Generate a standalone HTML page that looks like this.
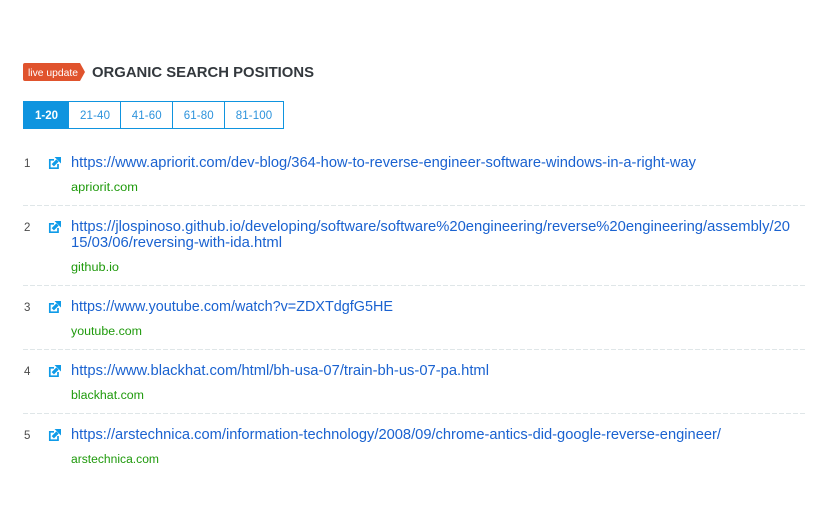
<!DOCTYPE html>
<html><head><meta charset="utf-8">
<style>
html,body{margin:0;padding:0;background:#fff;width:825px;height:525px;overflow:hidden}
body{position:relative;font-family:"Liberation Sans",sans-serif}
svg.t{position:absolute;left:0;top:0}
text{font-family:"Liberation Sans",sans-serif}
.u{font-size:14.5px;fill:#1a62d0}
.d{font-size:11.5px;fill:#1f9a0c}
.n{font-size:11.5px;fill:#4a4a4a}
.p{font-size:11.5px;fill:#2c93dc}
</style></head><body>
<svg class="t" width="825" height="525" viewBox="0 0 825 525">
<defs>
<g id="i"><path d="M6 3.800H1.800V12.200H10V8" fill="none" stroke="#0f9be8" stroke-width="1.700"/><path d="M6.500 1H13V7.500Z" fill="#0f9be8"/><path d="M9.500 4.500L4.800 9.300" fill="none" stroke="#0f9be8" stroke-width="3.200"/></g>
</defs>
<path d="M25 63H80L85 72L80 81H25Q23 81 23 79V65Q23 63 25 63Z" fill="#e0532d"/>
<text x="28" y="76" font-size="10.5" fill="#fff" textLength="50" lengthAdjust="spacingAndGlyphs">live update</text>
<text x="92" y="77" font-size="15" font-weight="bold" fill="#33383d" textLength="222" lengthAdjust="spacingAndGlyphs">ORGANIC SEARCH POSITIONS</text>
<rect x="23.5" y="101.5" width="260" height="27" fill="#fff" stroke="#0f94df"/>
<rect x="23" y="101" width="46" height="28" fill="#0f94df"/>
<path d="M120.500 101V129M172.500 101V129M224.500 101V129" stroke="#0f94df"/>
<text x="35" y="119" font-size="11.5" font-weight="bold" fill="#fff" textLength="23">1-20</text>
<text x="80" y="119" class="p" textLength="30">21-40</text>
<text x="131.700" y="119" class="p" textLength="30">41-60</text>
<text x="183.700" y="119" class="p" textLength="30">61-80</text>
<text x="235.700" y="119" class="p" textLength="36.500">81-100</text>

<path d="M23 205.500H807M23 285.500H807M23 349.500H807M23 413.500H807" stroke="#dfe6e8" stroke-dasharray="5 2"/>

<text x="24" y="167" class="n">1</text>
<use href="#i" x="48" y="156"/>
<text x="71" y="167" class="u" textLength="625" lengthAdjust="spacingAndGlyphs">https://www.apriorit.com/dev-blog/364-how-to-reverse-engineer-software-windows-in-a-right-way</text>
<text x="71" y="191" class="d" textLength="67" lengthAdjust="spacingAndGlyphs">apriorit.com</text>

<text x="24" y="231" class="n">2</text>
<use href="#i" x="48" y="220"/>
<text x="71" y="231" class="u" textLength="719" lengthAdjust="spacingAndGlyphs">https://jlospinoso.github.io/developing/software/software%20engineering/reverse%20engineering/assembly/20</text>
<text x="71" y="247" class="u" textLength="211" lengthAdjust="spacingAndGlyphs">15/03/06/reversing-with-ida.html</text>
<text x="71" y="271" class="d" textLength="48" lengthAdjust="spacingAndGlyphs">github.io</text>

<text x="24" y="311" class="n">3</text>
<use href="#i" x="48" y="300"/>
<text x="71" y="311" class="u" textLength="322" lengthAdjust="spacingAndGlyphs">https://www.youtube.com/watch?v=ZDXTdgfG5HE</text>
<text x="71" y="335" class="d" textLength="71" lengthAdjust="spacingAndGlyphs">youtube.com</text>

<text x="24" y="375" class="n">4</text>
<use href="#i" x="48" y="364"/>
<text x="71" y="375" class="u" textLength="418" lengthAdjust="spacingAndGlyphs">https://www.blackhat.com/html/bh-usa-07/train-bh-us-07-pa.html</text>
<text x="71" y="399" class="d" textLength="73" lengthAdjust="spacingAndGlyphs">blackhat.com</text>

<text x="24" y="439" class="n">5</text>
<use href="#i" x="48" y="428"/>
<text x="71" y="439" class="u" textLength="650" lengthAdjust="spacingAndGlyphs">https://arstechnica.com/information-technology/2008/09/chrome-antics-did-google-reverse-engineer/</text>
<text x="71" y="463" class="d" textLength="88" lengthAdjust="spacingAndGlyphs">arstechnica.com</text>
</svg>
</body></html>
